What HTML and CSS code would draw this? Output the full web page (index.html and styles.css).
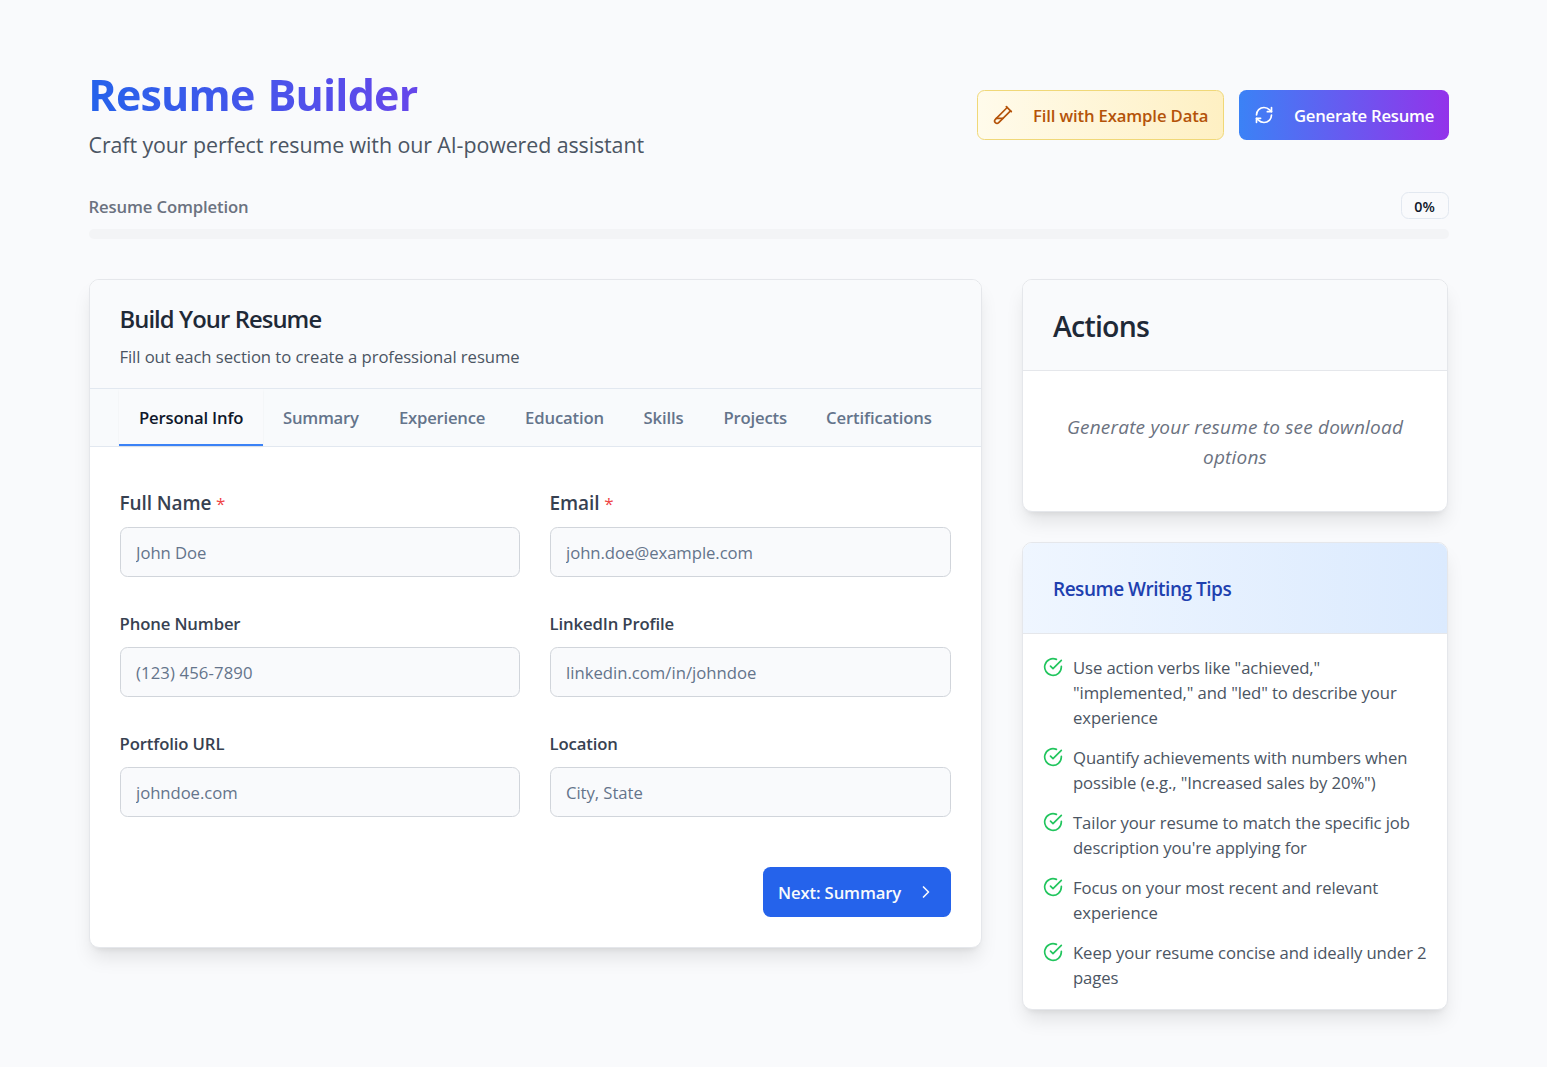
FILE: index.html
```html
<!DOCTYPE html>
<html lang="en">
<head>
<meta charset="utf-8">
<title>Resume Builder</title>
<link rel="stylesheet" href="styles.css">
</head>
<body>
<main class="page">
  <header class="header">
    <div class="intro">
      <h1 class="title">Resume Builder</h1>
      <p class="subtitle">Craft your perfect resume with our AI-powered assistant</p>
    </div>
    <div class="header-actions">
      <button class="btn btn-example" type="button">
        <svg class="icon" viewBox="0 0 24 24"><path d="M21 7 6.82 21.18a2.83 2.83 0 0 1-3.99-.01a2.83 2.83 0 0 1 0-4L17 3"/><path d="m16 2 6 6"/><path d="M12 16H4"/></svg>
        <span>Fill with Example Data</span>
      </button>
      <button class="btn btn-generate" type="button">
        <svg class="icon" viewBox="0 0 24 24"><path d="M3 12a9 9 0 0 1 9-9 9.75 9.75 0 0 1 6.74 2.74L21 8"/><path d="M21 3v5h-5"/><path d="M21 12a9 9 0 0 1-9 9 9.75 9.75 0 0 1-6.74-2.74L3 16"/><path d="M8 16H3v5"/></svg>
        <span>Generate Resume</span>
      </button>
    </div>
  </header>

  <section class="completion">
    <div class="completion-row">
      <span class="completion-label">Resume Completion</span>
      <span class="badge">0%</span>
    </div>
    <div class="progress"></div>
  </section>

  <div class="columns">
    <section class="card builder">
      <div class="builder-head">
        <h2 class="builder-title">Build Your Resume</h2>
        <p class="builder-text">Fill out each section to create a professional resume</p>
      </div>
      <nav class="tabs">
        <a class="tab tab-active">Personal Info</a>
        <a class="tab tab-summary">Summary</a>
        <a class="tab tab-experience">Experience</a>
        <a class="tab tab-education">Education</a>
        <a class="tab tab-skills">Skills</a>
        <a class="tab tab-projects">Projects</a>
        <a class="tab tab-certifications">Certifications</a>
      </nav>
      <form class="form">
        <div class="fields">
          <div class="field"><label class="label label-required" for="name">Full Name <span class="star">*</span></label><input class="input" id="name" placeholder="John Doe"></div>
          <div class="field"><label class="label label-required" for="email">Email <span class="star">*</span></label><input class="input" id="email" placeholder="john.doe@example.com"></div>
          <div class="field"><label class="label" for="phone">Phone Number</label><input class="input input-phone" id="phone" placeholder="(123) 456-7890"></div>
          <div class="field"><label class="label" for="linkedin">LinkedIn Profile</label><input class="input input-link" id="linkedin" placeholder="linkedin.com/in/johndoe"></div>
          <div class="field"><label class="label" for="portfolio">Portfolio URL</label><input class="input" id="portfolio" placeholder="johndoe.com"></div>
          <div class="field"><label class="label" for="location">Location</label><input class="input" id="location" placeholder="City, State"></div>
        </div>
        <div class="form-footer">
          <button class="btn btn-next" type="button">
            <span>Next: Summary</span>
            <svg class="icon" viewBox="0 0 24 24"><path d="m9 18 6-6-6-6"/></svg>
          </button>
        </div>
      </form>
    </section>

    <aside class="side">
      <section class="card">
        <div class="side-head"><h2 class="actions-title">Actions</h2></div>
        <p class="actions-text">Generate your resume to see download options</p>
      </section>
      <section class="card">
        <div class="side-head tips-head"><h3 class="tips-title">Resume Writing Tips</h3></div>
        <ul class="tips">
          <li class="tip"><svg class="icon tip-icon" viewBox="0 0 24 24"><path d="M22 11.08V12a10 10 0 1 1-5.93-9.14"/><path d="m9 11 3 3L22 4"/></svg><span>Use action verbs like "achieved," "implemented," and "led" to describe your experience</span></li>
          <li class="tip"><svg class="icon tip-icon" viewBox="0 0 24 24"><path d="M22 11.08V12a10 10 0 1 1-5.93-9.14"/><path d="m9 11 3 3L22 4"/></svg><span>Quantify achievements with numbers when possible (e.g., "Increased sales by 20%")</span></li>
          <li class="tip"><svg class="icon tip-icon" viewBox="0 0 24 24"><path d="M22 11.08V12a10 10 0 1 1-5.93-9.14"/><path d="m9 11 3 3L22 4"/></svg><span>Tailor your resume to match the specific job description you're applying for</span></li>
          <li class="tip"><svg class="icon tip-icon" viewBox="0 0 24 24"><path d="M22 11.08V12a10 10 0 1 1-5.93-9.14"/><path d="m9 11 3 3L22 4"/></svg><span>Focus on your most recent and relevant experience</span></li>
          <li class="tip"><svg class="icon tip-icon" viewBox="0 0 24 24"><path d="M22 11.08V12a10 10 0 1 1-5.93-9.14"/><path d="m9 11 3 3L22 4"/></svg><span>Keep your resume concise and ideally under 2 pages</span></li>
        </ul>
      </section>
    </aside>
  </div>
</main>
</body>
</html>
```
FILE: styles.css
```css
* { box-sizing: border-box; margin: 0; padding: 0; }

body {
  background: #f9fafc;
  color: #0f172a;
  font: 400 16.7px/25px "Open Sans", "Noto Sans", sans-serif;
  letter-spacing: -0.1px;
}

.page { width: 1360px; margin-left: 89px; padding: 70px 0 50px; }

.header { display: flex; justify-content: space-between; align-items: center; height: 90px; }
.title {
  width: fit-content;
  padding-right: 227px;
  font-size: 43px;
  font-weight: 700;
  line-height: 50px;
  letter-spacing: -0.8px;
  word-spacing: 2.5px;
  text-indent: -0.7px;
  background: linear-gradient(to right, #2563eb, #9333ea);
  -webkit-background-clip: text;
  background-clip: text;
  color: transparent;
}
.subtitle { margin-top: 5px; padding-top: 2px; font-size: 21.4px; line-height: 33px; letter-spacing: -0.09px; text-indent: -0.5px; color: #4b5563; }
.intro { height: 90px; }
.subtitle { line-height: 35px; }

.header-actions { display: flex; gap: 15px; }
.btn {
  display: flex;
  align-items: center;
  height: 50px;
  border: 0;
  border-radius: 7.5px;
  font: inherit;
  font-weight: 600;
  white-space: nowrap;
}
.icon { width: 20px; height: 20px; flex: none; fill: none; stroke: currentColor; stroke-width: 2; stroke-linecap: round; stroke-linejoin: round; }
.btn-example {
  width: 247px;
  gap: 20px;
  padding-left: 15px;
  border: 1px solid #f0d878;
  background: linear-gradient(to right, #fffbeb, #fef0c3);
  color: #b45309;
  letter-spacing: -0.14px;
}
.btn-generate {
  width: 210px;
  gap: 20px;
  padding-left: 15px;
  background: linear-gradient(to right, #3b82f6, #9333ea);
  color: #fff;
  letter-spacing: -0.26px;
}
.btn-next { width: 188px; gap: 14.5px; padding-left: 15px; background: #2563eb; color: #f8fafc; letter-spacing: -0.13px; }

.completion { margin-top: 32px; }
.completion-row { display: flex; justify-content: space-between; align-items: center; height: 27px; }
.completion-label { padding-top: 2px; margin-left: -0.5px; color: #6b7280; font-weight: 600; letter-spacing: -0.13px; }
.badge {
  width: 48px;
  height: 27px;
  padding-right: 1px;
  border: 1px solid #e2e8f0;
  border-radius: 7.5px;
  text-align: center;
  font-size: 14.3px;
  font-weight: 550;
  line-height: 27px;
}
.progress { height: 10px; margin-top: 10px; border-radius: 5px; background: #f3f4f6; }

.columns { display: grid; grid-template-columns: 893px 426px; column-gap: 40px; align-items: start; margin-top: 40px; }
.card {
  border: 1px solid #e5e7eb;
  border-radius: 10px;
  background: #fff;
  box-shadow: 0 12.5px 18.75px -3.75px rgba(0, 0, 0, .1), 0 5px 7.5px -5px rgba(0, 0, 0, .1);
  overflow: hidden;
}

.builder-head { height: 109px; padding: 22px 30px 0; border-bottom: 1px solid #e2e8f0; background: #f9fafc; text-indent: -0.6px; }
.builder-title { font-size: 23.8px; font-weight: 600; line-height: 35px; letter-spacing: -0.91px; color: #1f2937; }
.builder-text { margin-top: 7px; letter-spacing: -0.07px; color: #4b5563; }

.tabs { display: flex; height: 58px; padding-left: 29px; border-bottom: 1px solid #e2e8f0; background: #f8fafc; }
.tab { padding: 16px 0 0 20px; color: #64748b; font-weight: 600; }
.tab-active { width: 144px; border-bottom: 2px solid #3b82f6; background: #f9fafc; box-shadow: 0 1px 2px rgba(0, 0, 0, .05); color: #0f172a; letter-spacing: -0.17px; }
.tab-summary { width: 116px; letter-spacing: -0.26px; }
.tab-experience { width: 126px; letter-spacing: -0.24px; }
.tab-education { width: 118.5px; letter-spacing: -0.14px; }
.tab-skills { width: 80px; letter-spacing: -0.14px; }
.tab-projects { width: 102.6px; letter-spacing: -0.19px; }
.tab-certifications { letter-spacing: -0.13px; }

.form { padding: 40px 30px 30px; }
.fields { display: grid; grid-template-columns: 400px 401px; column-gap: 30px; row-gap: 30px; }
.field { display: flex; flex-direction: column; justify-content: flex-end; height: 90px; }
.label { margin-bottom: 11px; color: #374151; font-weight: 600; letter-spacing: -0.13px; text-indent: -0.4px; }
.label-required { font-size: 19px; letter-spacing: -0.12px; }
.star { color: #ef4444; font-size: 17px; font-weight: 500; }
.input {
  width: 100%;
  height: 50px;
  padding: 0 15px;
  border: 1px solid #d1d5db;
  border-radius: 7.5px;
  background: #f9fafc;
  font: inherit;
  letter-spacing: -0.06px;
}
.input::placeholder { color: #64748b; opacity: 1; }
.input-phone { letter-spacing: 0.12px; }
.input-link { letter-spacing: 0; }
.form-footer { display: flex; justify-content: flex-end; margin-top: 50px; }

.side { display: grid; gap: 30px; }
.side-head { display: flex; align-items: center; height: 91px; padding: 2px 30px 0; border-bottom: 1px solid #e5e7eb; background: #f9fafc; }
.actions-title { font-size: 28.5px; font-weight: 600; line-height: 40px; letter-spacing: -0.785px; color: #1f2937; }
.actions-text {
  padding: 41px 40px 39px;
  color: #6b7280;
  font-size: 19px;
  font-style: italic;
  line-height: 30px;
  letter-spacing: 0.2px;
  text-align: center;
}
.tips-head { padding-top: 3px; background: linear-gradient(to right, #eff6ff, #dbeafe); }
.tips-title { font-size: 19px; font-weight: 600; letter-spacing: -0.48px; color: #1e40af; }
.tips { display: grid; gap: 15px; padding: 21px 20px 19px; list-style: none; color: #4b5563; }
.tip { display: flex; gap: 10px; }
.tip > span { margin-right: -2px; }
.tip-icon { margin-top: 2px; color: #22c55e; }
```
